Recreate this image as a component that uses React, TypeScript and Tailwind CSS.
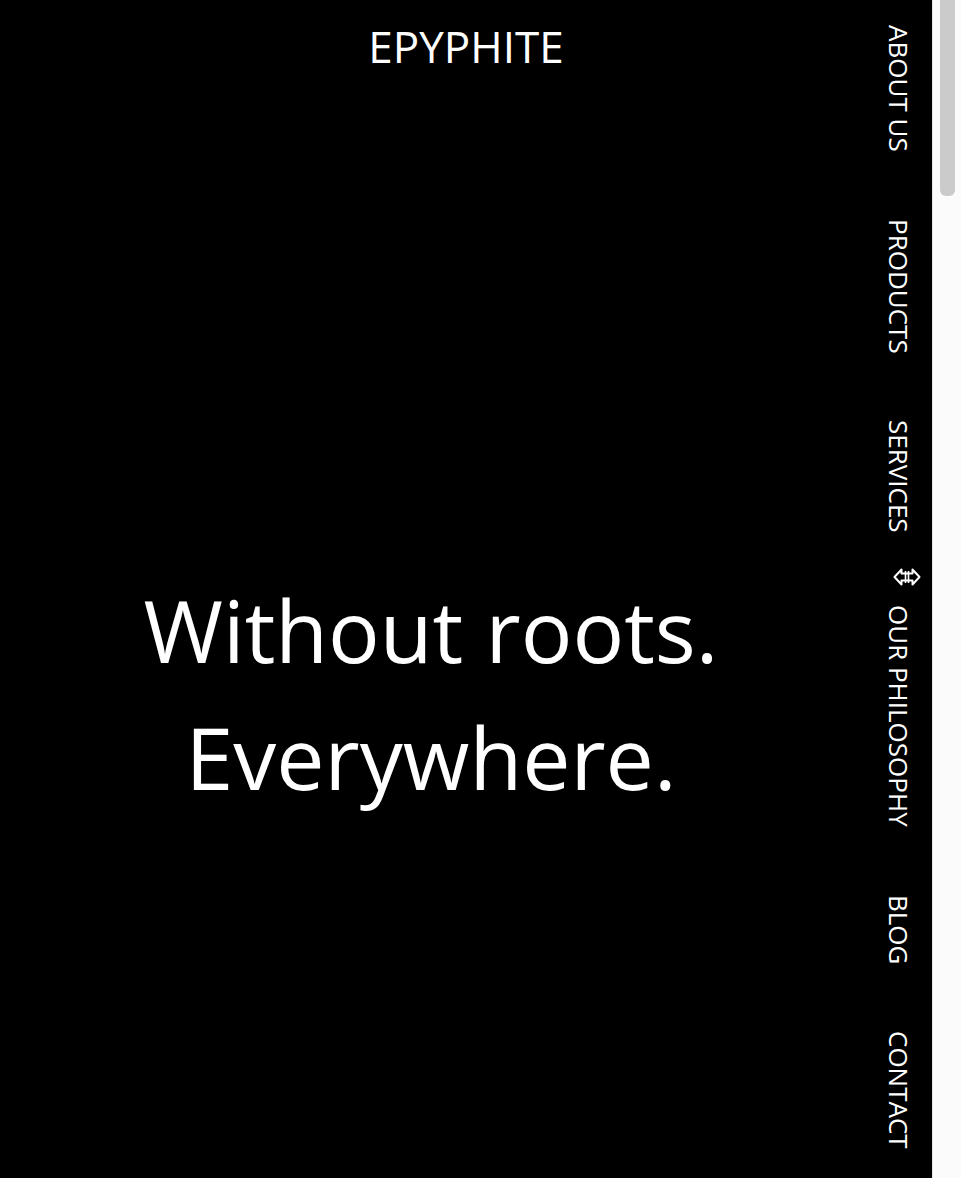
import React from "react";

const font = { fontFamily: '"Open Sans", "Noto Sans", "Liberation Sans", sans-serif' };

const navItems = [
  { label: "ABOUT US", cls: "" },
  { label: "PRODUCTS", cls: "" },
  { label: "SERVICES", cls: "" },
  { label: "OUR PHILOSOPHY", cls: "mt-[5px]" },
  { label: "BLOG", cls: "mt-[1px]" },
  { label: "CONTACT", cls: "" },
];

function ResizeCursor() {
  return (
    <svg width="28" height="22" viewBox="0 0 28 22" className="block">
      <path
        d="M1.5 11 L8.5 3.5 L8.5 7.5 L19.5 7.5 L19.5 3.5 L26.5 11 L19.5 18.5 L19.5 14.5 L8.5 14.5 L8.5 18.5 Z"
        fill="#000000"
        stroke="#ffffff"
        strokeWidth="2"
        strokeLinejoin="round"
      />
      <path d="M12.5 5 V17 M15.5 5 V17" stroke="#ffffff" strokeWidth="1.6" />
    </svg>
  );
}

export default function App() {
  return (
    <div className="flex h-[1178px] w-[961px] overflow-hidden bg-black" style={font}>
      <div className="relative flex h-full w-[932px] bg-black text-white">
        <header className="absolute inset-x-0 top-0 pt-[24px] text-center text-[44px] leading-none">
          EPYPHITE
        </header>
        <main className="flex w-[862px] flex-col items-center pt-[566px] text-center text-[86px] leading-[127px]">
          <p>Without roots.</p>
          <p>Everywhere.</p>
        </main>
        <nav className="relative flex w-[70px] flex-col items-center gap-[67px] pl-[4px] pt-[25px] text-[26px] leading-none">
          {navItems.map((item) => (
            <a key={item.label} className={`[writing-mode:vertical-rl] whitespace-nowrap ${item.cls}`}>
              {item.label}
            </a>
          ))}
          <div className="absolute left-[31px] top-[566px]">
            <ResizeCursor />
          </div>
        </nav>
      </div>
      <div className="relative h-full w-[29px] border-l border-[#e6e6e6] bg-[#fbfbfb]">
        <div className="ml-[7px] h-[196px] w-[15px] rounded-b-[6px] bg-[#cbcbcb]" />
      </div>
    </div>
  );
}
